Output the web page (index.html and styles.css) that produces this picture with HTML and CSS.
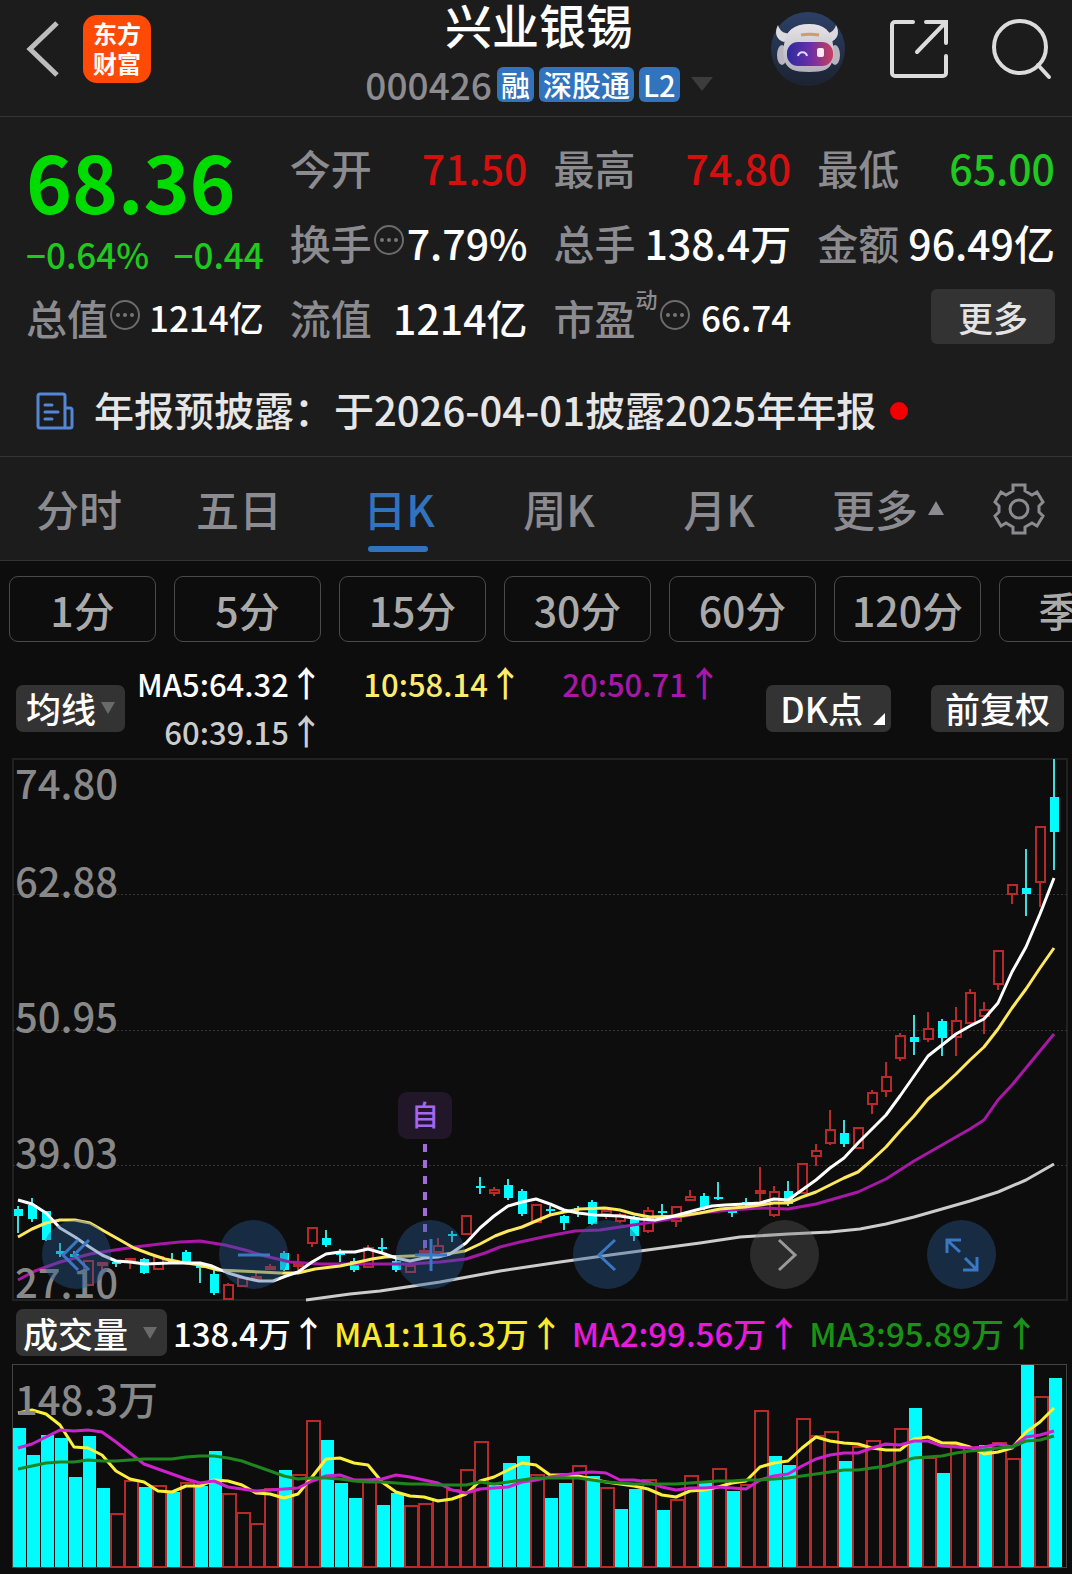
FILE: index.html
```html
<!DOCTYPE html>
<html lang="zh-CN">
<head>
<meta charset="utf-8">
<meta name="viewport" content="width=device-width, initial-scale=1">
<title>兴业银锡 000426</title>
<link rel="stylesheet" href="styles.css">
</head>
<body>
<header class="topbar">
  <div class="topbar-side">
    <button class="icon-button back" aria-label="返回">
      <svg width="34" height="56" viewBox="0 0 34 56"><path d="M31 2 4 28l27 26" fill="none" stroke="#bdbdbd" stroke-width="5"/></svg>
    </button>
    <a class="logo" href="#"><span>东方</span><span>财富</span></a>
  </div>
  <div class="stock">
    <h1 class="stock-name">兴业银锡</h1>
    <div class="stock-meta">
      <span class="stock-code">000426</span>
      <span class="badge">融</span>
      <span class="badge">深股通</span>
      <span class="badge">L2</span>
      <svg class="stock-caret" width="22" height="14" viewBox="0 0 22 14"><path d="M0 0h22L11 14z" fill="#3c3c3c"/></svg>
    </div>
  </div>
  <div class="topbar-side topbar-actions">
    <button class="icon-button" aria-label="智能助手">
      <svg width="76" height="76" viewBox="0 0 76 76">
        <defs>
          <linearGradient id="visor" x1="0" x2="1"><stop offset="0" stop-color="#2c2a9c"/><stop offset=".5" stop-color="#6a2fa8"/><stop offset="1" stop-color="#c8405c"/></linearGradient>
          <linearGradient id="disc" x1="0" x2="0" y1="0" y2="1"><stop offset="0" stop-color="#2c4066"/><stop offset="1" stop-color="#1c2331"/></linearGradient>
          <linearGradient id="helmet" x1="0" x2="0" y1="0" y2="1"><stop offset="0" stop-color="#e6e3e8"/><stop offset="1" stop-color="#b3afbb"/></linearGradient>
        </defs>
        <circle cx="38" cy="38" r="37" fill="url(#disc)"/>
        <path d="M8 14c-4 7-2 15 6 17l10-8c-9 0-14-2-16-9zM66 14c4 7 2 15-6 17l-10-8c9 0 14-2 16-9z" fill="#dcd9df"/>
        <ellipse cx="12" cy="44" rx="5" ry="10" fill="#b9b5c0"/><ellipse cx="65" cy="44" rx="5" ry="10" fill="#b9b5c0"/>
        <path d="M14 34c1-14 10-21 25-21s23 7 24 21c1 8 1 12-1 17-2 7-8 10-23 10s-21-3-24-10c-2-5-2-9-1-17z" fill="url(#helmet)"/>
        <path d="M31 24c5-1 12-1 18 0" fill="none" stroke="#d39a6c" stroke-width="3"/>
        <rect x="17" y="31" width="46" height="24" rx="11" fill="url(#visor)"/>
        <path d="M28 45c1-5 8-5 9 0" fill="none" stroke="#dcd8ff" stroke-width="2"/>
        <rect x="47" y="37" width="7" height="9" rx="2" fill="#ffe9f2"/>
      </svg>
    </button>
    <button class="icon-button" aria-label="分享">
      <svg width="58" height="58" viewBox="0 0 58 58" fill="none" stroke="#dcdcdc" stroke-width="4"><path d="M23 2H5a3 3 0 0 0-3 3v48a3 3 0 0 0 3 3h48a3 3 0 0 0 3-3V36M36 2h20v21M55 3 27 32" stroke-linecap="round"/></svg>
    </button>
    <button class="icon-button" aria-label="搜索">
      <svg width="60" height="62" viewBox="0 0 60 62" fill="none" stroke="#dcdcdc" stroke-width="4"><circle cx="28" cy="29" r="26"/><path d="m46 47 11 12" stroke-linecap="round"/></svg>
    </button>
  </div>
</header>

<section class="quote">
  <div class="price-block">
    <strong class="price">68.36</strong>
    <div class="change"><span>−0.64%</span><span>−0.44</span></div>
  </div>
  <div class="stat"><span class="stat-label">今开</span><span class="stat-value up">71.50</span></div>
  <div class="stat"><span class="stat-label">最高</span><span class="stat-value up">74.80</span></div>
  <div class="stat"><span class="stat-label">最低</span><span class="stat-value down">65.00</span></div>
  <div class="stat"><span class="stat-label">换手<svg class="info" viewBox="0 0 30 30"><use href="#info-dots"/></svg></span><span class="stat-value">7.79%</span></div>
  <div class="stat"><span class="stat-label">总手</span><span class="stat-value">138.4万</span></div>
  <div class="stat"><span class="stat-label">金额</span><span class="stat-value">96.49亿</span></div>
  <div class="stat"><span class="stat-label">总值<svg class="info" viewBox="0 0 30 30"><use href="#info-dots"/></svg></span><span class="stat-value small">1214亿</span></div>
  <div class="stat"><span class="stat-label">流值</span><span class="stat-value">1214亿</span></div>
  <div class="stat"><span class="stat-label">市盈<sup class="stat-sup">动</sup><svg class="info" viewBox="0 0 30 30"><use href="#info-dots"/></svg></span><span class="stat-value small">66.74</span></div>
  <div class="stat stat-action"><button class="more-button">更多</button></div>
</section>

<a class="notice" href="#">
  <svg width="38" height="38" viewBox="0 0 38 38" fill="none" stroke="#5486d6" stroke-width="3" stroke-linejoin="round"><path d="M29 36H4a2 2 0 0 1-2-2V4a2 2 0 0 1 2-2h23a2 2 0 0 1 2 2v32h5a2 2 0 0 0 2-2V18a2 2 0 0 0-2-2h-5"/><path d="M9 13h7M9 20h13M9 27h7" stroke-linecap="round"/></svg>
  <span class="notice-text">年报预披露：于2026-04-01披露2025年年报</span>
  <span class="notice-dot"></span>
</a>

<nav class="tabs">
  <button class="tab">分时</button>
  <button class="tab">五日</button>
  <button class="tab active">日K</button>
  <button class="tab">周K</button>
  <button class="tab">月K</button>
  <button class="tab">更多<svg width="16" height="14" viewBox="0 0 16 14"><path d="M8 0l8 14H0z" fill="#8b8b90"/></svg></button>
  <button class="tab tab-settings" aria-label="设置">
    <svg width="52" height="52" viewBox="0 0 52 52" fill="none" stroke="#8b8b90" stroke-width="3"><path d="M20 2h12v6l7 4 5-3 6 10-4 4v6l4 4-6 10-5-3-7 4v6H20v-6l-7-4-5 3-6-10 4-4v-6l-4-4L8 9l5 3 7-4z"/><circle cx="26" cy="26" r="9"/></svg>
  </button>
</nav>

<main class="chart-area">
  <div class="periods">
    <button class="period">1分</button>
    <button class="period">5分</button>
    <button class="period">15分</button>
    <button class="period">30分</button>
    <button class="period">60分</button>
    <button class="period">120分</button>
    <button class="period">季K</button>
  </div>

  <div class="ma-bar">
    <button class="pill">均线<svg width="14" height="12" viewBox="0 0 14 12"><path d="M0 0h14L7 12z" fill="#6a6a6a"/></svg></button>
    <div class="ma-legend">
      <span class="ma5">MA5:64.32<span class="arrow">↑</span></span>
      <span class="ma10">10:58.14<span class="arrow">↑</span></span>
      <span class="ma20">20:50.71<span class="arrow">↑</span></span>
      <span class="ma60">60:39.15<span class="arrow">↑</span></span>
    </div>
    <button class="pill pill-dk">DK点<svg width="12" height="12" viewBox="0 0 12 12"><path d="M12 0v12H0z" fill="#fff"/></svg></button>
    <button class="pill pill-wide">前复权</button>
  </div>

  <div class="kline">
    <svg id="kline" class="plot" viewBox="0 758 1072 544" role="img" aria-label="日K线图"></svg>
    <div class="controls">
      <button class="control" aria-label="最左"><svg viewBox="0 0 34 34"><path d="M18 2 3 17l15 15M29 2 14 17l15 15"/></svg></button>
      <button class="control" aria-label="缩小"><svg viewBox="0 0 34 34"><path d="M1 17h32"/></svg></button>
      <button class="control" aria-label="放大"><svg viewBox="0 0 34 34"><path d="M1 17h32M17 1v32"/></svg></button>
      <button class="control" aria-label="左移"><svg viewBox="0 0 34 34"><path d="M24 2 8 17l16 15"/></svg></button>
      <button class="control disabled" aria-label="右移"><svg viewBox="0 0 34 34"><path d="m11 2 16 15-16 15"/></svg></button>
      <button class="control" aria-label="全屏"><svg viewBox="0 0 34 34"><path d="M2 15V2h14M2 2l13 12M32 19v13H18M32 32 20 20"/></svg></button>
    </div>
  </div>

  <div class="volume-bar">
    <button class="pill pill-volume">成交量<svg width="14" height="12" viewBox="0 0 14 12"><path d="M0 0h14L7 12z" fill="#6a6a6a"/></svg></button>
    <div class="volume-legend">
      <span class="vol-now">138.4万<span class="arrow">↑</span></span>
      <span class="vol-ma1">MA1:116.3万<span class="arrow">↑</span></span>
      <span class="vol-ma2">MA2:99.56万<span class="arrow">↑</span></span>
      <span class="vol-ma3">MA3:95.89万<span class="arrow">↑</span></span>
    </div>
  </div>

  <svg id="volume" class="plot" viewBox="0 1363 1072 206" role="img" aria-label="成交量图"></svg>
</main>

<svg class="symbols" aria-hidden="true">
  <symbol id="info-dots" viewBox="0 0 30 30"><circle cx="15" cy="15" r="14" fill="none" stroke="#6c6c6e" stroke-width="2"/><g fill="#77777a"><circle cx="8" cy="15" r="2"/><circle cx="15" cy="15" r="2"/><circle cx="22" cy="15" r="2"/></g></symbol>
</svg>
<script src="chart.js"></script>
</body>
</html>
```
FILE: styles.css
```css
* { box-sizing: border-box; }

body {
  margin: 0;
  background: #0d0d0d;
  color: #fff;
  font-family: "Noto Sans CJK SC", "Noto Sans", sans-serif;
  font-weight: 500;
  overflow-x: hidden;
}

button {
  margin: 0;
  padding: 0;
  border: 0;
  background: none;
  color: inherit;
  font: inherit;
}

svg { display: block; flex: none; }
.symbols { display: none; }

/* top bar */
.topbar {
  display: flex;
  align-items: flex-start;
  justify-content: space-between;
  height: 117px;
  background: #1c1c1c;
  border-bottom: 1px solid #333;
}
.topbar-side {
  display: flex;
  align-items: center;
  flex: 1 1 0;
  height: 98px;
  padding-left: 26px;
}
.back { margin-right: 23px; }
.logo {
  display: flex;
  flex-direction: column;
  align-items: center;
  justify-content: center;
  width: 68px;
  height: 68px;
  padding-bottom: 2px;
  border-radius: 14px;
  background: #ff4a06;
  color: #fff;
  font-size: 24px;
  font-weight: 700;
  line-height: 30px;
  text-decoration: none;
}
.topbar-actions {
  justify-content: flex-end;
  gap: 44px;
  padding: 0 20px 0 0;
}
.stock { text-align: center; }
.stock-name {
  margin: 0;
  font-size: 47px;
  font-weight: 500;
  line-height: 48px;
}
.stock-meta {
  display: flex;
  align-items: center;
  justify-content: center;
  gap: 5px;
  height: 36px;
  margin-top: 18px;
}
.stock-code { color: #8b8b90; font-size: 37px; line-height: 36px; }
.badge {
  padding: 0 4px;
  border-radius: 6px;
  background: #3273bd;
  font-size: 29px;
  line-height: 35px;
}
.stock-caret { margin-left: 6px; }

/* quote */
.quote {
  display: grid;
  grid-template-columns: repeat(4, 1fr);
  grid-auto-rows: 75px;
  column-gap: 26px;
  padding: 12px 17px 8px 26px;
  background: #1c1c1c;
}
.price-block { grid-row: span 2; }
.price {
  display: block;
  color: #00dc00;
  font-size: 78px;
  font-weight: 700;
  line-height: 102px;
}
.change {
  display: flex;
  justify-content: space-between;
  color: #1fc91f;
  font-size: 35px;
  line-height: 46px;
}
.stat {
  display: flex;
  align-items: center;
  justify-content: space-between;
  white-space: nowrap;
}
.stat-label {
  display: flex;
  align-items: center;
  color: #8b8b90;
  font-size: 41px;
}
.stat-value { font-size: 41px; }
.stat-value.small { font-size: 35px; }
.stat-sup { align-self: flex-start; font-size: 22px; line-height: 22px; }
.info { width: 30px; height: 30px; margin: 0 0 4px 2px; }
.up { color: #d40f0f; }
.down { color: #1fc91f; }
.stat-action { justify-content: flex-end; }
.more-button {
  width: 124px;
  height: 55px;
  border-radius: 6px;
  background: #333;
  color: #e4e4e4;
  font-size: 35px;
  line-height: 50px;
}

/* notice */
.notice {
  display: flex;
  align-items: center;
  height: 95px;
  padding: 4px 36px 0;
  background: #1c1c1c;
  border-bottom: 1px solid #333;
  color: #e6e6e6;
  font-size: 40px;
  text-decoration: none;
  white-space: nowrap;
}
.notice-text { margin: 0 0 4px 20px; }
.notice-dot {
  width: 18px;
  height: 18px;
  margin-left: 14px;
  border-radius: 50%;
  background: #f00000;
}

/* tabs */
.tabs {
  display: grid;
  grid-template-columns: repeat(5, 160fr) 178fr 94fr;
  height: 104px;
  background: #1c1c1c;
  border-bottom: 1px solid #333;
}
.tab {
  position: relative;
  display: flex;
  align-items: center;
  justify-content: center;
  gap: 10px;
  padding: 0 2px 2px 0;
  color: #8b8b90;
  font-size: 43px;
}
.tab.active { color: #3273bd; }
.tab.active::after {
  content: "";
  position: absolute;
  bottom: 8px;
  left: calc(50% - 32px);
  width: 60px;
  height: 6px;
  border-radius: 3px;
  background: #3273bd;
}
.tab-settings { padding: 0 12px 0 0; }

/* periods */
.periods {
  display: flex;
  gap: 18px;
  padding: 15px 9px 0;
  overflow: hidden;
}
.period {
  flex: none;
  width: 147px;
  height: 66px;
  border: 1px solid #4a4a4a;
  border-radius: 9px;
  color: #aaa;
  font-size: 41px;
  line-height: 60px;
}

/* moving averages */
.ma-bar {
  display: flex;
  align-items: center;
  height: 116px;
  padding: 16px 8px 0 16px;
}
.pill {
  display: flex;
  align-items: center;
  justify-content: center;
  gap: 5px;
  flex: none;
  height: 47px;
  padding: 0 10px;
  border-radius: 7px;
  background: #333;
  font-size: 35px;
  line-height: 44px;
}
.pill-wide { padding: 0 14px; }
.pill-dk { margin-right: 40px; padding: 0 6px 0 14px; gap: 10px; }
.pill-dk svg { align-self: flex-end; margin-bottom: 7px; }
.ma-legend {
  display: grid;
  grid-template-columns: auto 199px 199px;
  justify-content: start;
  justify-items: end;
  flex: 1;
  padding-left: 12px;
  font-size: 31px;
  line-height: 48px;
}
.arrow {
  display: inline-block;
  width: 29px;
  font-size: 35px;
  line-height: 40px;
}
.ma10 { color: #fdec6c; }
.ma20 { color: #a718a7; }
.ma60 { color: #ccc; }

/* plots */
.plot { width: 100%; height: auto; }
.kline { position: relative; }
.controls {
  position: absolute;
  right: 76px;
  bottom: 13px;
  left: 42px;
  display: flex;
  justify-content: space-between;
}
.control {
  display: flex;
  align-items: center;
  justify-content: center;
  width: 69px;
  height: 69px;
  border-radius: 50%;
  background: rgba(40, 90, 150, 0.4);
}
.control svg {
  width: 34px;
  height: 34px;
  fill: none;
  stroke: #3b78c4;
  stroke-width: 3;
}
.control.disabled { background: rgba(110, 110, 110, 0.32); }
.control.disabled svg { stroke: #999; }

.axis { fill: #888; font-size: 40px; }
.frame { fill: none; stroke: #222; stroke-width: 2; }
.frame-volume { fill: none; stroke: #444; }
.grid { stroke: #333; stroke-dasharray: 2 2; }
.fall { fill: #00fcfc; }
.rise { fill: #0d0d0d; stroke: #b82a2a; stroke-width: 2; }
.wick-fall { stroke: #40dcdc; stroke-width: 2; }
.wick-rise { stroke: #b82a2a; stroke-width: 2; }
.line { fill: none; stroke-width: 3; stroke-linejoin: round; }
.line-white { stroke: #fff; }
.line-yellow { stroke: #fde860; }
.line-magenta { stroke: #a718a7; }
.line-grey { stroke: #ccc; }
.line-vol1 { stroke: #fdf03c; }
.line-vol2 { stroke: #cc22cc; }
.line-vol3 { stroke: #1f861f; }
.marker-box { fill: #211728; }
.marker-text { fill: #a566f0; font-size: 28px; text-anchor: middle; }
.marker-line { stroke: #a06bdc; stroke-width: 4; stroke-dasharray: 8 8; }

/* volume */
.volume-bar {
  display: flex;
  align-items: center;
  height: 61px;
  padding: 0 8px 0 16px;
}
.pill-volume { width: 151px; padding: 0 10px 0 7px; justify-content: space-between; }
.volume-legend {
  display: flex;
  gap: 14px;
  padding-left: 6px;
  font-size: 33px;
  line-height: 44px;
  white-space: nowrap;
}
.vol-ma1 { color: #fbea28; }
.vol-ma2 { color: #e619dc; }
.vol-ma3 { color: #1a9216; }
```
FILE: chart.js
```js
// One entry per day: [direction, high, body top, body bottom, low].
// "d" closes below its open, "u" above it.
const days = [
  ["d",1206,1209,1216,1233],["d",1198,1205,1219,1222],["d",1211,1211,1240,1241],["d",1243,1251,1254,1257],
  ["d",1251,1254,1257,1258],["u",1261,1261,1285,1285],["u",1262,1263,1265,1270],["d",1260,1262,1264,1267],
  ["u",1258,1259,1261,1269],["d",1258,1259,1273,1274],["u",1257,1257,1269,1269],["d",1253,1260,1262,1262],
  ["d",1250,1252,1262,1263],["d",1265,1266,1268,1283],["d",1270,1274,1293,1295],["u",1283,1285,1299,1300],
  ["u",1277,1278,1286,1286],["u",1273,1277,1279,1281],["u",1264,1267,1269,1270],["d",1251,1253,1270,1271],
  ["u",1254,1264,1266,1270],["u",1228,1228,1243,1247],["d",1230,1238,1245,1247],["d",1249,1253,1255,1262],
  ["d",1258,1261,1270,1272],["u",1245,1248,1267,1267],["d",1238,1247,1249,1252],["d",1259,1261,1270,1272],
  ["u",1265,1266,1272,1273],["u",1247,1251,1253,1254],["u",1238,1246,1252,1252],["d",1231,1234,1236,1242],
  ["u",1216,1216,1234,1234],["d",1177,1186,1188,1194],["u",1187,1190,1193,1196],["d",1179,1185,1198,1200],
  ["d",1189,1191,1214,1216],["u",1205,1205,1222,1222],["d",1206,1209,1211,1214],["d",1215,1216,1223,1230],
  ["d",1206,1208,1210,1217],["d",1200,1202,1224,1225],["u",1210,1211,1214,1219],["u",1213,1215,1221,1223],
  ["d",1216,1218,1236,1241],["u",1207,1211,1231,1233],["d",1204,1211,1213,1216],["u",1206,1207,1221,1227],
  ["u",1190,1197,1200,1201],["d",1193,1196,1208,1210],["d",1182,1197,1199,1200],["d",1209,1211,1213,1217],
  ["d",1198,1202,1204,1207],["u",1167,1191,1193,1202],["u",1186,1192,1215,1217],["d",1181,1191,1204,1206],
  ["u",1164,1164,1193,1193],["u",1144,1151,1156,1166],["u",1110,1130,1143,1145],["d",1120,1133,1144,1147],
  ["u",1128,1128,1148,1148],["u",1090,1093,1104,1114],["u",1062,1077,1091,1097],["u",1033,1036,1058,1061],
  ["d",1015,1037,1042,1055],["u",1012,1029,1039,1042],["d",1019,1021,1038,1056],["u",1007,1021,1037,1056],
  ["u",989,993,1023,1023],["u",1002,1010,1016,1034],["u",951,951,984,990],["u",885,885,894,904],
  ["d",849,888,894,916],["u",827,827,882,907],["d",759,797,832,870]
];

const averages = {
  grey: "306,1300 350,1294 380,1291 440,1282 500,1271 560,1262 610,1255 640,1251 700,1243 740,1237 788,1234 830,1232 860,1229 886,1224 914,1217 942,1209 970,1201 998,1192 1026,1180 1054,1164",
  magenta: "18,1280 35,1271 60,1262 90,1254 115,1250 135,1247 160,1244 180,1242 200,1241 225,1245 245,1250 265,1256 290,1262 320,1264 396,1264 410,1264 440,1262 466,1259 485,1253 500,1247 520,1242 548,1236 575,1231 600,1230 640,1224 670,1219 700,1213 730,1210 760,1208 788,1209 816,1204 858,1192 886,1179 914,1161 942,1145 970,1129 984,1120 998,1100 1012,1085 1026,1068 1040,1051 1054,1034",
  yellow: "18,1237 32,1229 46,1223 60,1220 75,1220 90,1223 104,1231 120,1240 134,1248 150,1254 165,1259 180,1262 200,1265 218,1270 240,1271 260,1272 280,1273 298,1273 315,1269 340,1266 354,1263 372,1259 385,1257 410,1256 440,1255 465,1251 480,1244 495,1236 508,1231 522,1227 536,1221 550,1215 564,1212 580,1209 605,1208 620,1210 634,1214 650,1217 680,1216 700,1213 720,1209 745,1207 760,1205 774,1203 788,1203 802,1197 816,1192 830,1185 844,1178 858,1172 872,1160 886,1147 900,1131 914,1116 928,1099 942,1087 956,1074 970,1060 984,1047 998,1029 1012,1008 1026,989 1040,968 1054,948",
  white: "18,1200 32,1204 46,1213 60,1228 75,1237 88,1246 102,1255 116,1261 130,1262 145,1264 170,1263 200,1263 212,1266 228,1273 245,1278 259,1281 273,1281 286,1276 298,1272 312,1262 326,1254 340,1252 355,1252 368,1249 382,1253 396,1258 410,1261 424,1258 438,1257 450,1254 466,1243 480,1228 494,1216 508,1206 522,1202 536,1199 550,1204 564,1210 578,1213 595,1215 620,1216 640,1219 655,1220 670,1217 685,1213 700,1209 712,1206 725,1205 745,1204 760,1203 774,1199 788,1200 802,1190 816,1180 830,1168 844,1158 858,1143 872,1129 886,1115 900,1096 914,1076 928,1056 942,1045 956,1034 970,1026 984,1019 998,1003 1012,972 1026,947 1040,914 1054,878"
};

// Volume levels are counted downwards, three to a unit of the plot.
const volumes = [
  385,465,405,413,530,408,565,640,541,561,554,576,546,558,453,580,637,670,564,510,521,361,420,549,595,
  541,615,578,614,610,596,568,507,422,556,489,469,523,595,549,496,529,560,627,568,536,630,596,526,548,
  505,573,553,331,468,495,355,405,394,484,437,419,432,384,324,470,520,432,450,435,427,474,195,287,234
];

// Bar colours follow the close against the day before, one letter per day.
const volumeTrend =
  "ddddddduudududduuuuduuddd" +
  "udduuuuuuddduddududduduud" +
  "uduudduuuduuuududuuduudud";

const volumeAverages = {
  vol1: [338,331,343,376,440,445,465,512,538,546,573,576,558,559,541,543,556,580,582,593,582,532,478,473,490,
    494,545,575,588,591,602,597,583,543,532,511,490,494,526,524,528,536,545,553,558,566,584,591,572,570,
    562,549,542,502,488,484,443,412,424,428,431,443,451,451,417,410,428,428,440,462,455,445,397,365,325],
  vol2: [443,431,410,391,394,391,397,427,460,491,508,521,537,549,543,560,568,572,570,567,563,542,528,526,540,
    540,536,526,531,541,549,570,580,566,563,560,545,539,530,524,519,515,520,540,541,545,562,569,563,563,
    562,565,568,541,528,522,498,478,464,458,458,443,433,436,423,423,437,440,444,440,431,440,411,404,393],
  vol3: [506,499,488,487,486,480,482,484,480,478,477,476,472,468,467,474,482,498,514,528,536,534,533,538,544,
    545,546,548,551,553,555,555,554,547,551,546,540,535,534,534,534,540,547,550,553,553,553,553,549,545,
    542,542,541,541,537,534,529,523,517,511,511,505,499,487,475,471,467,460,454,449,445,440,423,419,408]
};

const dayX = i => 18 + 14 * i;
const volumeY = level => Math.round(1300 + level / 3);

function add(parent, name, attributes, text) {
  const node = document.createElementNS("http://www.w3.org/2000/svg", name);
  for (const key in attributes) node.setAttribute(key, attributes[key]);
  if (text) node.textContent = text;
  parent.appendChild(node);
}

const kline = document.getElementById("kline");
add(kline, "rect", { class: "frame", x: 13, y: 759, width: 1054, height: 541 });
for (const y of [894, 1030, 1165]) {
  add(kline, "line", { class: "grid", x1: 13, x2: 1067, y1: y + 0.5, y2: y + 0.5 });
}
days.forEach(([direction, high, top, bottom, low], i) => {
  const x = dayX(i);
  if (direction === "d") {
    add(kline, "line", { class: "wick-fall", x1: x, x2: x, y1: high, y2: low });
    add(kline, "rect", { class: "fall", x: x - 4, y: top, width: 9, height: bottom - top });
  } else {
    add(kline, "line", { class: "wick-rise", x1: x, x2: x, y1: high, y2: top });
    add(kline, "line", { class: "wick-rise", x1: x, x2: x, y1: bottom, y2: low });
    add(kline, "rect", { class: "rise", x: x - 4, y: top, width: 9, height: bottom - top });
  }
});
for (const name in averages) {
  add(kline, "polyline", { class: "line line-" + name, points: averages[name] });
}
add(kline, "line", { class: "marker-line", x1: 425, x2: 425, y1: 1144, y2: 1248 });
add(kline, "rect", { class: "marker-box", x: 398, y: 1092, width: 54, height: 47, rx: 9 });
add(kline, "text", { class: "marker-text", x: 425, y: 1126 }, "自");
[["74.80", 799], ["62.88", 897], ["50.95", 1032], ["39.03", 1168], ["27.10", 1298]].forEach(([label, y]) => {
  add(kline, "text", { class: "axis", x: 15, y }, label);
});

const volume = document.getElementById("volume");
add(volume, "rect", { class: "frame-volume", x: 12.5, y: 1364.5, width: 1054, height: 203 });
volumes.forEach((level, i) => {
  const x = dayX(i);
  const y = volumeY(level);
  if (volumeTrend[i] === "d") {
    add(volume, "rect", { class: "fall", x: x - 5, y, width: 13, height: 1567 - y });
  } else {
    add(volume, "rect", { class: "rise", x: x - 5, y: y + 1, width: 13, height: 1566 - y });
  }
});
for (const name in volumeAverages) {
  const points = volumeAverages[name].map((level, i) => dayX(i) + "," + volumeY(level)).join(" ");
  add(volume, "polyline", { class: "line line-" + name, points });
}
add(volume, "text", { class: "axis", x: 15, y: 1415 }, "148.3万");
```
